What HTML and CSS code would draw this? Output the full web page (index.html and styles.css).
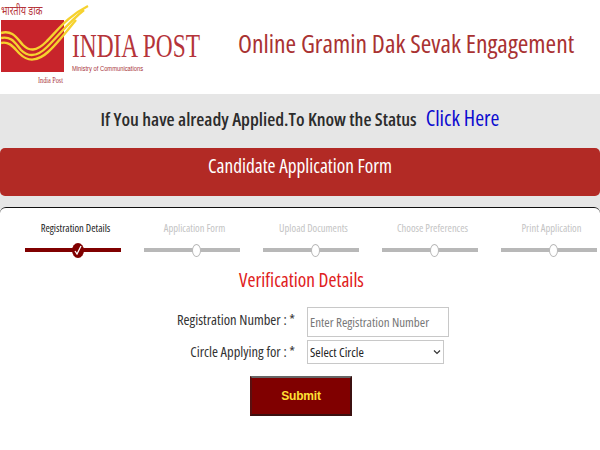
FILE: index.html
```html
<!DOCTYPE html>
<html lang="en">
<head>
<meta charset="utf-8">
<title>Online Gramin Dak Sevak Engagement</title>
<link rel="stylesheet" href="styles.css">
</head>
<body>
<header class="top">
  <svg class="logo" width="205" height="94" viewBox="0 0 205 94" xmlns="http://www.w3.org/2000/svg">
    <text transform="translate(1 15) scale(1 1.35)" class="hindi">भारतीय डाक</text>
    <rect x="1" y="20" width="63" height="52" fill="#c8242b"/>
    <path d="M1 33C12 30 16 37 23 45C29 51 36 52 46 42C58 30 68 16 88 6" fill="none" stroke="#f6d22e" stroke-width="2.4"/>
    <path d="M1 38C12 36 15 43 21 50C28 57 37 57 47 47C58 36 70 21 84 10" fill="none" stroke="#f6d22e" stroke-width="2.4"/>
    <path d="M1 43C10 41 14 48 20 54C28 62 38 61 48 52C56 45 66 32 76 20" fill="none" stroke="#f6d22e" stroke-width="2.4"/>
    <text transform="translate(72 57) scale(1 1.4)" class="brand">INDIA POST</text>
    <text transform="translate(72 71) scale(1 1.2)" class="ministry">Ministry of Communications</text>
    <text transform="translate(38 83) scale(1 1.4)" class="place">India Post</text>
  </svg>
  <h1 class="title">Online Gramin Dak Sevak Engagement</h1>
</header>
<main class="band">
  <p class="status"><b>If You have already Applied.To Know the Status</b><a href="#">Click Here</a></p>
  <h2 class="formbar">Candidate Application Form</h2>
  <section class="card">
    <ol class="steps">
      <li class="step done">
        <span class="label">Registration Details</span>
        <span class="track"><span class="dot"><svg width="8" height="10" viewBox="0 0 8 10"><path d="M1 6L3 9L7 1" fill="none" stroke="#fff" stroke-width="1.3"/></svg></span></span>
      </li>
      <li class="step"><span class="label">Application Form</span><span class="track"><span class="dot"></span></span></li>
      <li class="step"><span class="label">Upload Documents</span><span class="track"><span class="dot"></span></span></li>
      <li class="step"><span class="label">Choose Preferences</span><span class="track"><span class="dot"></span></span></li>
      <li class="step"><span class="label">Print Application</span><span class="track"><span class="dot"></span></span></li>
    </ol>
    <h3 class="verify">Verification Details</h3>
    <form class="form">
      <label class="flabel flabel-high" for="reg">Registration Number : *</label>
      <input class="input" id="reg" type="text" placeholder="Enter Registration Number">
      <label class="flabel" for="circle">Circle Applying for : *</label>
      <select class="select" id="circle"><option>Select Circle</option></select>
      <button class="submit" type="button">Submit</button>
    </form>
  </section>
</main>
</body>
</html>
```
FILE: styles.css
```css
* { box-sizing: border-box; }
html, body { margin: 0; padding: 0; }
body {
  width: 600px;
  height: 450px;
  overflow: hidden;
  background: #fff;
  font-family: "Open Sans", "Noto Sans", sans-serif;
  font-stretch: 75%;
}
.top {
  height: 94px;
  display: flex;
  align-items: flex-start;
}
.logo { flex: none; }
.hindi { font: 9px "Noto Sans", "Noto Sans CJK SC", sans-serif; fill: #b5343a; }
.brand { font: 23.4px "Liberation Serif", serif; fill: #b5343a; }
.ministry { font: 5.8px "Liberation Sans", sans-serif; fill: #a8343a; }
.place { font: 6.2px "Liberation Serif", serif; fill: #a8343a; }
.title {
  margin: 28px 0 0 33px;
  font-size: 25.6px;
  line-height: 32px;
  font-weight: 400;
  color: #a93232;
  white-space: nowrap;
}
.band {
  height: 356px;
  background: #e6e6e6;
  display: flex;
  flex-direction: column;
}
.status {
  margin: 0;
  height: 54px;
  padding-top: 9px;
  text-align: center;
  font-size: 18.5px;
  line-height: 30px;
  color: #2c2c2c;
  white-space: nowrap;
}
.status a { margin-left: 9px; font-size: 21.5px; color: #0b0bd0; text-decoration: none; }
.status b { font-weight: 600; }
.formbar {
  margin: 0;
  height: 48px;
  padding-top: 3px;
  background: #b22a25;
  border-radius: 5px;
  color: #fff;
  text-align: center;
  font-size: 19.3px;
  line-height: 30px;
  font-weight: 400;
}
.card {
  flex: 1;
  margin-top: 11px;
  background: #fff;
  border-top: 1px solid #111;
  border-top-left-radius: 6px;
  border-top-right-radius: 6px;
  overflow: hidden;
}
.steps {
  list-style: none;
  margin: 13px 0 0 13px;
  padding: 0;
  display: grid;
  grid-template-columns: repeat(5, 119px);
  width: 600px;
}
.step { display: flex; flex-direction: column; align-items: center; }
.label {
  margin-left: 6px;
  font-size: 10.5px;
  line-height: 14px;
  color: #c4c4c4;
  white-space: nowrap;
}
.done .label { color: #222; }
.track {
  width: 96px;
  height: 4px;
  margin-top: 13px;
  padding-left: 10px;
  background: #b8b8b8;
  display: flex;
  align-items: center;
  justify-content: center;
}
.dot {
  width: 9px;
  height: 13px;
  border: 1.5px solid #b8b8b8;
  border-radius: 50%;
  background: #fff;
  flex: none;
}
.done .track { background: #800000; }
.done .dot {
  width: 12px;
  height: 15px;
  border: 0;
  background: #800000;
  display: flex;
  align-items: center;
  justify-content: center;
}
.verify {
  margin: 14px 0 0;
  padding-left: 3px;
  text-align: center;
  font-size: 19.4px;
  line-height: 28px;
  font-weight: 400;
  color: #e02020;
}
.form {
  margin-top: 13px;
  display: grid;
  grid-template-columns: 295px 150px;
  column-gap: 12px;
  row-gap: 3px;
  align-items: center;
  justify-content: start;
}
.flabel {
  text-align: right;
  font-size: 14.5px;
  line-height: 20px;
  color: #333;
  white-space: nowrap;
}
.flabel-high { padding-bottom: 4px; }
.input {
  width: 142px;
  height: 30px;
  padding: 0 2px;
  border: 1px solid #c8c8c8;
  background: #fff;
  font-family: inherit;
  font-stretch: 75%;
  font-size: 13px;
}
.input::placeholder { color: #777; opacity: 1; }
.select {
  appearance: none;
  width: 137px;
  height: 24px;
  padding: 0 2px;
  border: 1px solid #c8c8c8;
  border-radius: 0;
  background: #fff url("data:image/svg+xml,%3Csvg xmlns='http://www.w3.org/2000/svg' width='8' height='6'%3E%3Cpath d='M1 1.5L4 4.5L7 1.5' fill='none' stroke='%23333' stroke-width='1.2'/%3E%3C/svg%3E") no-repeat right 2px center;
  color: #222;
  font-family: inherit;
  font-stretch: 75%;
  font-size: 13px;
}
.submit {
  grid-column: 1 / -1;
  justify-self: start;
  margin: 9px 0 0 250px;
  width: 102px;
  height: 40px;
  background: #800000;
  border: 2px solid;
  border-color: #666 #3c1010 #3c1010 #5a1010;
  color: #ffe135;
  font: bold 12px "Liberation Sans", sans-serif;
  letter-spacing: -0.2px;
}
```
